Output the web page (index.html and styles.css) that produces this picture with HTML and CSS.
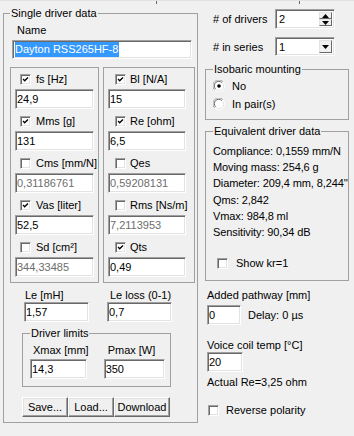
FILE: index.html
```html
<!DOCTYPE html>
<html lang="en">
<head>
    <meta charset="UTF-8">
    <meta name="viewport" content="width=device-width, initial-scale=1.0">
    <title>Driver data</title>
    <link rel="stylesheet" href="styles.css">
</head>
<body>
    <div class="top-edge"><span class="cell c1"></span><span class="cell c2"></span><span class="cell"></span></div>

    <div class="window">
        <fieldset class="group driver">
            <legend>Single driver data</legend>
            <div class="caption name-caption">Name</div>
            <div class="field name-field"><span class="selected">Dayton RSS265HF-8</span></div>

            <div class="params">
                <div class="panel left">
                    <div class="param">
                        <div class="check-line"><span class="box"><svg viewBox="0 0 11 11"><path d="M2.5 5 L4.5 7 L8.5 3"/></svg></span>fs [Hz]</div>
                        <input class="field" value="24,9">
                    </div>
                    <div class="param">
                        <div class="check-line"><span class="box"><svg viewBox="0 0 11 11"><path d="M2.5 5 L4.5 7 L8.5 3"/></svg></span>Mms [g]</div>
                        <input class="field" value="131">
                    </div>
                    <div class="param">
                        <div class="check-line"><span class="box"></span>Cms [mm/N]</div>
                        <input class="field calc" value="0,31186761" readonly>
                    </div>
                    <div class="param">
                        <div class="check-line"><span class="box"><svg viewBox="0 0 11 11"><path d="M2.5 5 L4.5 7 L8.5 3"/></svg></span>Vas [liter]</div>
                        <input class="field" value="52,5">
                    </div>
                    <div class="param">
                        <div class="check-line"><span class="box"></span>Sd [cm²]</div>
                        <input class="field calc" value="344,33485" readonly>
                    </div>
                </div>
                <div class="panel right">
                    <div class="param">
                        <div class="check-line"><span class="box"><svg viewBox="0 0 11 11"><path d="M2.5 5 L4.5 7 L8.5 3"/></svg></span>Bl [N/A]</div>
                        <input class="field" value="15">
                    </div>
                    <div class="param">
                        <div class="check-line"><span class="box"><svg viewBox="0 0 11 11"><path d="M2.5 5 L4.5 7 L8.5 3"/></svg></span>Re [ohm]</div>
                        <input class="field" value="6,5">
                    </div>
                    <div class="param">
                        <div class="check-line"><span class="box"></span>Qes</div>
                        <input class="field calc" value="0,59208131" readonly>
                    </div>
                    <div class="param">
                        <div class="check-line"><span class="box"></span>Rms [Ns/m]</div>
                        <input class="field calc" value="7,2113953" readonly>
                    </div>
                    <div class="param">
                        <div class="check-line"><span class="box"><svg viewBox="0 0 11 11"><path d="M2.5 5 L4.5 7 L8.5 3"/></svg></span>Qts</div>
                        <input class="field" value="0,49">
                    </div>
                </div>
            </div>

            <div class="pair le-row">
                <div class="col le">
                    <div class="caption">Le [mH]</div>
                    <input class="field" value="1,57">
                </div>
                <div class="col le-loss">
                    <div class="caption">Le loss (0-1)</div>
                    <input class="field" value="0,7">
                </div>
            </div>

            <fieldset class="group limits">
                <legend>Driver limits</legend>
                <div class="pair">
                    <div class="col xmax">
                        <div class="caption">Xmax [mm]</div>
                        <input class="field" value="14,3">
                    </div>
                    <div class="col pmax">
                        <div class="caption">Pmax [W]</div>
                        <input class="field" value="350">
                    </div>
                </div>
            </fieldset>

            <div class="buttons">
                <button class="save">Save...</button>
                <button class="load">Load...</button>
                <button class="download">Download</button>
            </div>
        </fieldset>

        <div class="side">
            <div class="setting">
                <span class="setting-label"># of drivers</span>
                <div class="field spinner">
                    <span class="value">2</span>
                    <span class="spin-buttons">
                        <span class="arrow-btn"><svg viewBox="0 0 7 4"><path d="M3.5 0 L7 4 L0 4 Z"/></svg></span>
                        <span class="arrow-btn"><svg viewBox="0 0 7 4"><path d="M0 0 L7 0 L3.5 4 Z"/></svg></span>
                    </span>
                </div>
            </div>
            <div class="setting series">
                <span class="setting-label"># in series</span>
                <div class="field combo">
                    <span class="value">1</span>
                    <span class="arrow-btn drop"><svg viewBox="0 0 7 4"><path d="M0 0 L7 0 L3.5 4 Z"/></svg></span>
                </div>
            </div>

            <fieldset class="group isobaric">
                <legend>Isobaric mounting</legend>
                <div class="radio-line">
                    <svg class="radio" viewBox="0 0 12 12">
                        <circle cx="6" cy="6" r="5.5" fill="#fff" stroke="#fff"/>
                        <path d="M1.6 9.9 A5.5 5.5 0 0 1 9.9 1.6" fill="none" stroke="#a0a0a0"/>
                        <path d="M2.6 8.9 A4.3 4.3 0 0 1 8.9 2.6" fill="none" stroke="#696969"/>
                        <path d="M9.4 3.1 A4.3 4.3 0 0 1 3.1 9.4" fill="none" stroke="#e3e3e3"/>
                        <circle cx="6" cy="6" r="1.8" fill="#000"/>
                    </svg>No
                </div>
                <div class="radio-line">
                    <svg class="radio" viewBox="0 0 12 12">
                        <circle cx="6" cy="6" r="5.5" fill="#fff" stroke="#fff"/>
                        <path d="M1.6 9.9 A5.5 5.5 0 0 1 9.9 1.6" fill="none" stroke="#a0a0a0"/>
                        <path d="M2.6 8.9 A4.3 4.3 0 0 1 8.9 2.6" fill="none" stroke="#696969"/>
                        <path d="M9.4 3.1 A4.3 4.3 0 0 1 3.1 9.4" fill="none" stroke="#e3e3e3"/>
                    </svg>In pair(s)
                </div>
            </fieldset>

            <fieldset class="group equivalent">
                <legend>Equivalent driver data</legend>
                <div class="data-lines">
                    <div>Compliance: 0,1559 mm/N</div>
                    <div>Moving mass: 254,6 g</div>
                    <div>Diameter: 209,4 mm, 8,244''</div>
                    <div>Qms: 2,842</div>
                    <div>Vmax: 984,8 ml</div>
                    <div>Sensitivity: 90,34 dB</div>
                </div>
                <div class="check-line kr"><span class="box"></span>Show kr=1</div>
            </fieldset>

            <div class="caption pathway-caption">Added pathway [mm]</div>
            <div class="input-row">
                <input class="field pathway" value="0">
                <span class="delay">Delay: 0 µs</span>
            </div>

            <div class="caption coil-caption">Voice coil temp [°C]</div>
            <input class="field coil" value="20">
            <div class="caption actual-re">Actual Re=3,25 ohm</div>

            <div class="check-line polarity"><span class="box"></span>Reverse polarity</div>
        </div>
    </div>
</body>
</html>
```

FILE: styles.css
```css
body {
    margin: 0;
    background-color: #f0f0f0;
    font-family: "Liberation Sans", Arial, sans-serif;
    font-size: 11px;
    color: #000;
}
.top-edge {
    display: flex;
    height: 3px;
    border-top: 1px solid #e3e3e3;
}
.top-edge .cell {
    flex: 1;
}
.top-edge .c1 {
    flex: 0 0 156px;
    border-right: 1px solid #696969;
}
.top-edge .c2 {
    flex: 0 0 142px;
    border-right: 1px solid #696969;
}
.window {
    display: flex;
    align-items: flex-start;
    padding: 3px 0 0 3px;
}

/* group boxes */
fieldset.group {
    margin: 0;
    min-width: 0;
    box-sizing: border-box;
    border: 1px solid #a0a0a0;
}
fieldset.group legend {
    padding: 0 1px;
    line-height: 13px;
}
.driver {
    width: 195px;
    padding: 3px 0 5px 6px;
}
.caption {
    line-height: 14px;
    white-space: nowrap;
}
.name-caption {
    margin-left: 7px;
}

/* edit boxes */
.field {
    display: block;
    box-sizing: border-box;
    height: 20px;
    margin: 0;
    padding: 0 0 0 1px;
    border: 1px solid;
    border-color: #a0a0a0 #fff #fff #a0a0a0;
    box-shadow: inset 1px 1px #696969, inset -1px -1px #e3e3e3;
    background-color: #fff;
    font: 11px "Liberation Sans", Arial, sans-serif;
    color: #000;
    outline: none;
}
.field.calc {
    color: #6d6d6d;
}
.name-field {
    width: 180px;
    height: 19px;
    margin: 3px 0 0 2px;
    padding-left: 2px;
    line-height: 15px;
    padding-top: 1px;
}
.selected {
    display: inline-block;
    background-color: #3399ff;
    color: #fff;
    padding-right: 1px;
}

/* parameter panels */
.params {
    display: flex;
    gap: 4px;
    margin-top: 8px;
}
.panel {
    box-sizing: border-box;
    border: 1px solid #a0a0a0;
    padding: 3px 0 5px 4px;
}
.panel.left {
    width: 89px;
}
.panel.right {
    width: 92px;
}
.param + .param {
    margin-top: 4px;
}
.param .field {
    margin-top: 2px;
}
.panel.left .field {
    width: 79px;
}
.panel.right .field {
    width: 78px;
}
.check-line {
    display: flex;
    align-items: center;
    height: 16px;
    gap: 5px;
    white-space: nowrap;
}
.panel.left .check-line {
    padding-left: 5px;
}
.panel.right .check-line {
    padding-left: 7px;
    gap: 4px;
}
.box {
    display: inline-block;
    box-sizing: border-box;
    width: 11px;
    height: 11px;
    border: 1px solid;
    border-color: #a0a0a0 #fff #fff #a0a0a0;
    box-shadow: inset 1px 1px #696969, inset -1px -1px #e3e3e3;
    background-color: #fff;
    flex: none;
}
.box svg {
    display: block;
    width: 9px;
    height: 9px;
}
.box path {
    fill: none;
    stroke: #000;
    stroke-width: 1.7;
}

/* Le row */
.pair {
    display: flex;
}
.le-row {
    margin-top: 5px;
}
.le-row .col .field {
    width: 65px;
}
.col.le {
    margin-left: 14px;
}
.col.le .caption {
    padding-left: 1px;
}
.col.le-loss {
    margin-left: 18px;
}
.col.le-loss .caption {
    padding-left: 3px;
}

/* driver limits */
.limits {
    width: 149px;
    margin: 5px 0 0 12px !important;
    padding: 3px 0 7px 7px;
}
.limits .caption {
    margin-bottom: 2px;
}
.col.xmax .caption {
    padding-left: 3px;
}
.col.xmax .field {
    width: 57px;
}
.col.pmax {
    margin-left: 15px;
}
.col.pmax .caption {
    padding-left: 4px;
}
.col.pmax .field {
    width: 61px;
}

/* buttons */
.buttons {
    display: flex;
    margin: 10px 0 0 12px;
}
button {
    box-sizing: border-box;
    height: 20px;
    padding: 0;
    border: 1px solid;
    border-color: #fff #696969 #696969 #fff;
    box-shadow: inset -1px -1px #a0a0a0, inset 1px 1px #e3e3e3;
    background-color: #f0f0f0;
    font: 11px "Liberation Sans", Arial, sans-serif;
    color: #000;
}
button.save,
button.load {
    width: 46px;
}
button.download {
    width: 56px;
}

/* right column */
.side {
    width: 144px;
    margin-left: 7px;
    display: flex;
    flex-direction: column;
    align-items: flex-start;
}
.setting {
    display: flex;
    align-items: center;
    margin-top: 2px;
}
.setting.series {
    margin-top: 8px;
}
.setting-label {
    width: 62px;
    padding-left: 8px;
    white-space: nowrap;
}
.spinner,
.combo {
    display: flex;
    width: 60px;
    padding: 2px 2px 2px 3px;
}
.combo {
    height: 19px;
}
.spinner .value,
.combo .value {
    flex: 1;
    line-height: 15px;
}
.spin-buttons {
    display: flex;
    flex-direction: column;
    width: 13px;
}
.arrow-btn {
    flex: 1;
    display: flex;
    align-items: center;
    justify-content: center;
    box-sizing: border-box;
    border: 1px solid;
    border-color: #e3e3e3 #696969 #696969 #e3e3e3;
    background-color: #f0f0f0;
}
.arrow-btn svg {
    width: 7px;
    height: 4px;
}
.arrow-btn.drop {
    flex: none;
    width: 13px;
}

.isobaric {
    width: 144px;
    margin-top: 7px !important;
    padding: 2px 0 7px 7px;
}
.radio-line {
    display: flex;
    align-items: center;
    height: 16px;
    gap: 7px;
}
.radio-line + .radio-line {
    margin-top: 2px;
}
.radio {
    width: 12px;
    height: 12px;
}
.equivalent {
    width: 144px;
    margin-top: 5px !important;
    padding: 5px 0 9px 7px;
}
.data-lines {
    line-height: 16.2px;
    white-space: nowrap;
    letter-spacing: -0.1px;
}
.check-line.kr {
    margin: 15px 0 0 4px;
    gap: 8px;
}
.pathway-caption {
    margin: 7px 0 0 2px;
}
.input-row {
    display: flex;
    align-items: center;
    margin: 3px 0 0 2px;
}
.field.pathway {
    width: 34px;
}
.delay {
    margin-left: 7px;
}
.coil-caption {
    margin: 13px 0 0 2px;
}
.field.coil {
    width: 36px;
    margin-left: 2px;
}
.actual-re {
    margin: 3px 0 0 2px;
}
.check-line.polarity {
    margin: 13px 0 0 3px;
    gap: 7px;
}
```
